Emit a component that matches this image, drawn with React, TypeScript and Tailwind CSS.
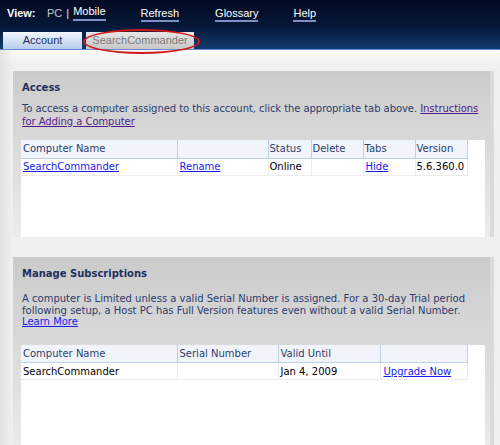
import React from "react";

const V = { fontFamily: '"DejaVu Sans", Verdana, sans-serif' };
const A = { fontFamily: '"Liberation Sans", Arial, sans-serif' };

function NavLink({ children }: { children: React.ReactNode }) {
  return (
    <span className="border-b-2 border-[#7d8fc4] pb-[1px] leading-[13px]">{children}</span>
  );
}

export default function App() {
  return (
    <div className="w-[500px] h-[445px] overflow-hidden bg-[#efefef] relative">
      {/* Header */}
      <div
        className="h-[50px] relative bg-gradient-to-b from-[#020b22] via-[#051636] to-[#123a6e] border-b border-[#6a8ad0]"
        style={A}
      >
        <div className="flex items-start pt-[5px] pl-[7px] text-[11px] text-white h-[28px]">
          <span className="font-bold w-[40px]">View:</span>
          <span className="text-[#c8c8c8]">PC</span>
          <span className="text-[#e0e0e0] mx-[4px]">|</span>
          <NavLink>Mobile</NavLink>
          <span className="ml-[35px]"><NavLink>Refresh</NavLink></span>
          <span className="ml-[36px]"><NavLink>Glossary</NavLink></span>
          <span className="ml-[35px]"><NavLink>Help</NavLink></span>
        </div>
        <div className="flex items-end h-[21px] pl-[3px] gap-[4px] text-[11px]">
          <div className="w-[79px] h-[17px] bg-gradient-to-b from-[#f4f8ff] to-[#b6cbea] text-[#1c2d5a] flex items-center justify-center">
            Account
          </div>
          <div className="w-[108px] h-[17px] bg-gradient-to-b from-[#e6e6e6] to-[#c8c8c8] text-[#7a7a7a] flex items-center justify-center">
            SearchCommander
          </div>
        </div>
        <div className="absolute left-[83px] top-[29px] w-[117px] h-[25px] rounded-[50%] border-2 border-[#d01818]" />
      </div>

      {/* Content */}
      <div className="bg-[linear-gradient(to_bottom,#fbfbfb_0px,#f0f0f0_14px)] h-[395px]">
        <div className="bg-gradient-to-r from-[#e2e2e2] to-transparent to-[13px] pt-[21px] pl-[13px] h-full" style={V}>
          <div className="w-[481px] bg-gradient-to-b from-[#cbcbcb] to-[#ececec] border-r-[4px] border-[#dadada] px-[8px] pt-[10px]">
            <div className="text-[10px] font-bold text-[#1e2f5e] pl-[1px] leading-[13px]">Access</div>
            <div className="text-[10px] text-[#2c3c6c] pl-[1px] leading-[13px] mt-[8px] tracking-[-0.06px]">
              To access a computer assigned to this account, click the appropriate tab above.{" "}
              <span className="text-[#551a8b] underline">Instructions</span>
              <br />
              <span className="text-[#551a8b] underline">for Adding a Computer</span>
            </div>
            <div className="bg-white w-[464px] h-[97px] mt-[12px]">
              <table className="text-[10px] border-collapse">
                <thead>
                  <tr className="bg-[#f1f5fb] text-[#2c3c6c] h-[18px]">
                    <td className="w-[156px] border-r border-b border-[#bdd0ea] pl-[2px]">Computer Name</td>
                    <td className="w-[91px] border-r border-b border-[#bdd0ea]"></td>
                    <td className="w-[43px] border-r border-b border-[#bdd0ea] pl-[1px]">Status</td>
                    <td className="w-[52px] border-r border-b border-[#bdd0ea] pl-[1px]">Delete</td>
                    <td className="w-[52px] border-r border-b border-[#bdd0ea] pl-[1px]">Tabs</td>
                    <td className="w-[52px] border-r border-b border-[#bdd0ea] pl-[1px]">Version</td>
                  </tr>
                </thead>
                <tbody>
                  <tr className="h-[17px] text-black">
                    <td className="border-r border-b border-[#ececec] pl-[2px]"><span className="text-[#1a1aee] underline">SearchCommander</span></td>
                    <td className="border-r border-b border-[#ececec] pl-[2px]"><span className="text-[#1a1aee] underline">Rename</span></td>
                    <td className="border-r border-b border-[#ececec] pl-[1px]">Online</td>
                    <td className="border-r border-b border-[#ececec]"></td>
                    <td className="border-r border-b border-[#ececec] pl-[2px]"><span className="text-[#1a1aee] underline">Hide</span></td>
                    <td className="border-r border-b border-[#ececec] pl-[1px]">5.6.360.0</td>
                  </tr>
                </tbody>
              </table>
            </div>
          </div>

          <div className="w-[481px] mt-[20px] h-[200px] bg-gradient-to-b from-[#cbcbcb] to-[#ececec] border-r-[4px] border-[#dadada] px-[8px] pt-[10px]">
            <div className="text-[10px] font-bold text-[#1e2f5e] pl-[1px] leading-[13px]">Manage Subscriptions</div>
            <div className="text-[10px] text-[#2c3c6c] pl-[1px] leading-[11.5px] mt-[13px]">
              A computer is Limited unless a valid Serial Number is assigned. For a 30-day Trial period following setup, a Host PC has Full Version features even without a valid Serial Number.{" "}
              <span className="text-[#1a1aee] underline">Learn More</span>
            </div>
            <div className="bg-white w-[464px] h-[120px] mt-[17px]">
              <table className="text-[10px] border-collapse">
                <thead>
                  <tr className="bg-[#f1f5fb] text-[#2c3c6c] h-[18px]">
                    <td className="w-[156px] border-r border-b border-[#bdd0ea] pl-[2px]">Computer Name</td>
                    <td className="w-[101px] border-r border-b border-[#bdd0ea] pl-[2px]">Serial Number</td>
                    <td className="w-[102px] border-r border-b border-[#bdd0ea] pl-[2px]">Valid Until</td>
                    <td className="w-[87px] border-r border-b border-[#bdd0ea]"></td>
                  </tr>
                </thead>
                <tbody>
                  <tr className="h-[17px] text-black">
                    <td className="border-r border-b border-[#ececec] pl-[2px]">SearchCommander</td>
                    <td className="border-r border-b border-[#ececec]"></td>
                    <td className="border-r border-b border-[#ececec] pl-[2px]">Jan 4, 2009</td>
                    <td className="border-r border-b border-[#ececec] pl-[3px]"><span className="text-[#1a1aee] underline">Upgrade Now</span></td>
                  </tr>
                </tbody>
              </table>
            </div>
          </div>
        </div>
      </div>
    </div>
  );
}
